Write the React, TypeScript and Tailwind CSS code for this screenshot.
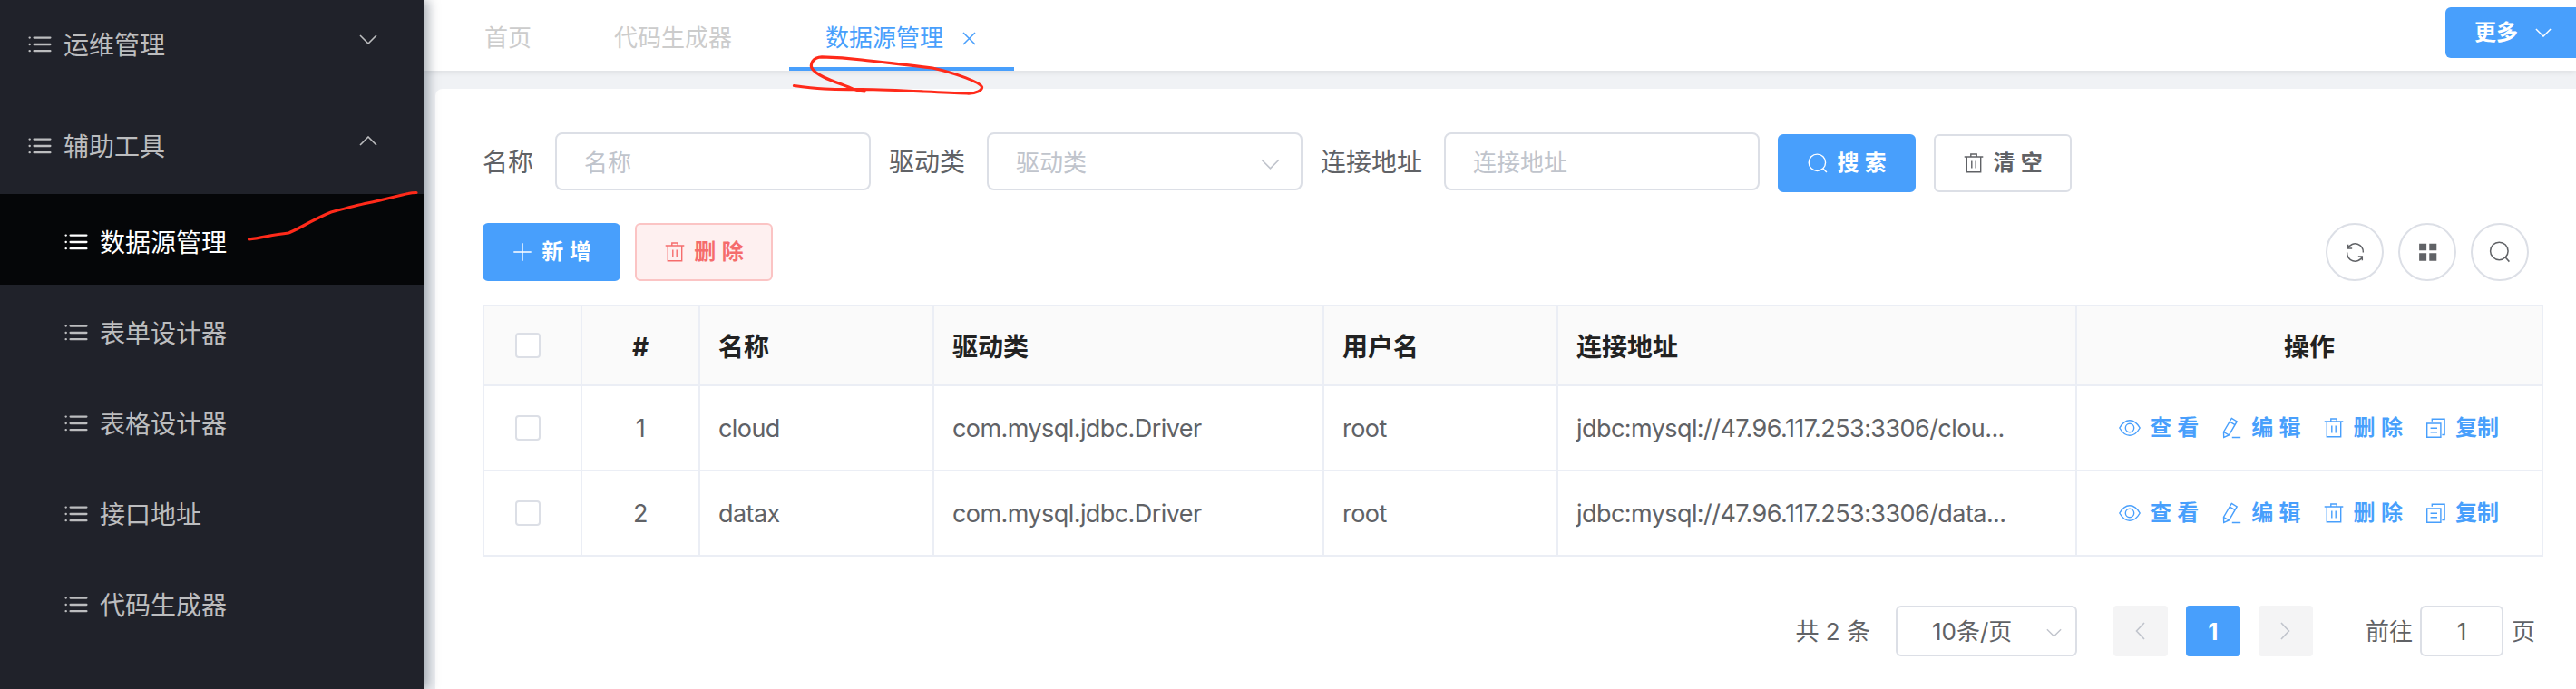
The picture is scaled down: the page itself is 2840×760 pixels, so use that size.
import React from "react";

type IconProps = { className?: string; children: React.ReactNode; size?: number };

function Icon({ className = "", children, size = 24 }: IconProps) {
  return (
    <svg
      width={size}
      height={size}
      viewBox="0 0 24 24"
      fill="none"
      stroke="currentColor"
      strokeWidth="1.4"
      className={"block shrink-0 " + className}
    >
      {children}
    </svg>
  );
}

const ListIcon = () => (
  <svg width="28" height="20" viewBox="0 0 28 20" className="block shrink-0" stroke="currentColor" strokeWidth="2.3" strokeLinecap="round">
    <path d="M7.6 2.6h17.8M7.6 10h17.8M7.6 17.2h17.8M2.6 2.6h.2M2.6 10h.2M2.6 17.2h.2" />
  </svg>
);

const Trash = () => (
  <Icon>
    <path d="M1.7 5h20.6M4.3 5v16.8h15.4V5M8.8 5V2h6.4v3M9.8 9.5v8M14.2 9.5v8" />
  </Icon>
);
const Search = () => (
  <Icon>
    <circle cx="11.4" cy="11.3" r="9.2" />
    <path d="M17.9 17.9l4 4.2" />
  </Icon>
);
const Plus = () => (
  <Icon>
    <path d="M12 2.3v19.4M2.3 12h19.4" />
  </Icon>
);
const Eye = () => (
  <Icon>
    <path d="M.8 12C4.200 6 8 3.700 12 3.700S19.800 6 23.200 12C19.800 18 16 20.300 12 20.300S4.200 18 .8 12z" />
    <circle cx="12" cy="12" r="4.700" />
  </Icon>
);
const Pencil = () => (
  <Icon>
    <path d="M12.300 1.400l5.900 3.500L9.400 19.900l-5.700 2.600-.2-6.100zM10.200 5.200l5.900 3.500M3.600 16.500l5.700 3.400M12.800 22.500h9.400" />
  </Icon>
);
const Copy = () => (
  <Icon>
    <path d="M2.700 7h15.200v15.300H2.700zM8.300 4.800V2.300h13.800v17.200h-2.700M6.600 12.300h7.400M6.600 16.700h7.400" />
  </Icon>
);
const Refresh = () => (
  <Icon size={25}>
    <path d="M4.600 7.100A8.500 8.500 0 0 1 20.500 12M3.500 12A8.500 8.500 0 0 0 19.400 16.900M4.500 3.600v4h4.300M19.500 20.400v-4h-4.300" />
  </Icon>
);
const Grid = () => (
  <Icon size={25}>
    <path stroke="none" fill="currentColor" d="M3 2.600h7.700v7.200H3zM13.700 2.600h7.700v7.200h-7.700zM3 12.800h7.700v8H3zM13.700 12.800h7.700v8h-7.700z" />
  </Icon>
);

function Chevron({ dir, w = 20, h = 12, className = "" }: { dir: "up" | "down" | "left" | "right"; w?: number; h?: number; className?: string }) {
  const d = {
    down: "M1 1L10 10L19 1",
    up: "M1 10L10 1L19 10",
    left: "M10 1L1.500 10L10 19",
    right: "M1 1L9.500 10L1 19",
  }[dir];
  const vertical = dir === "left" || dir === "right";
  return (
    <svg width={w} height={h} viewBox={vertical ? "0 0 11 20" : "0 0 20 11"} fill="none" stroke="currentColor" strokeWidth="1.6" className={"block shrink-0 " + className}>
      <path d={d} />
    </svg>
  );
}

function MenuGroup({ label, open }: { label: string; open?: boolean }) {
  return (
    <div className="flex h-[112px] shrink-0 items-center pl-[30px] pr-[52px] pt-[5px] text-[#bcbdbf]">
      <ListIcon />
      <span className="ml-[12px] flex-1 pt-[2px] text-[28px] leading-10">{label}</span>
      <Chevron dir={open ? "up" : "down"} w={20} h={11} className="-mt-[11px]" />
    </div>
  );
}

function MenuItem({ label, active }: { label: string; active?: boolean }) {
  return (
    <div className={"flex h-[100px] shrink-0 items-center pl-[70px] pt-[5px] " + (active ? "bg-[#050608] text-white" : "text-[#bcbdbf]")}>
      <ListIcon />
      <span className="ml-[12px] pt-[2px] text-[28px] leading-10">{label}</span>
    </div>
  );
}

function Field({ label, gap, select }: { label: string; gap: string; select?: boolean }) {
  return (
    <>
      <span className={"whitespace-nowrap pt-[2px] text-[28px] leading-10 text-[#606266] " + gap}>{label}</span>
      <div className="ml-[24px] flex h-[64px] w-[348px] shrink-0 items-center justify-between rounded-[8px] border-2 border-[#dcdfe6] pl-[30px] pr-[23px] text-[26px] text-[#c0c4cc]">
        <span className="pt-[3px]">{label}</span>
        {select && <Chevron dir="down" w={21} h={12} className="mt-[5px]" />}
      </div>
    </>
  );
}

function Button({ icon, label, tone }: { icon: React.ReactNode; label: string; tone: string }) {
  return (
    <div className={"flex h-[64px] w-[152px] shrink-0 items-center justify-center gap-[9px] rounded-[6px] border-2 text-[24px] font-bold " + tone}>
      {icon}
      <span className="whitespace-nowrap [word-spacing:0.6px]">{label}</span>
    </div>
  );
}

const cell = "flex items-center border-r-2 border-b-2 border-[#ebeef5]";
const columns = "grid grid-cols-[108px_130px_258px_430px_258px_572px_514px]";

const Box = () => <span className="mr-[10px] block size-[28px] rounded-[4px] border-2 border-[#dcdfe6] bg-white" />;

const actions = [
  { icon: <Eye />, label: "查 看" },
  { icon: <Pencil />, label: "编 辑" },
  { icon: <Trash />, label: "删 除" },
  { icon: <Copy />, label: "复制" },
];

const rows = [
  { id: 1, name: "cloud", driver: "com.mysql.jdbc.Driver", user: "root", url: "jdbc:mysql://47.96.117.253:3306/clou..." },
  { id: 2, name: "datax", driver: "com.mysql.jdbc.Driver", user: "root", url: "jdbc:mysql://47.96.117.253:3306/data..." },
];

const headers = ["名称", "驱动类", "用户名", "连接地址"];

export default function App() {
  return (
    <div className="relative flex h-[760px] w-[2840px] overflow-hidden bg-[#f0f2f5] font-['Inter','Noto_Sans_CJK_SC',sans-serif]">
      <aside className="relative z-10 flex w-[468px] shrink-0 flex-col bg-[#20222a] shadow-[4px_0_12px_rgba(0,21,41,0.35)]">
        <div className="-mt-[10px] flex flex-col">
          <MenuGroup label="运维管理" />
          <MenuGroup label="辅助工具" open />
          <MenuItem label="数据源管理" active />
          <MenuItem label="表单设计器" />
          <MenuItem label="表格设计器" />
          <MenuItem label="接口地址" />
          <MenuItem label="代码生成器" />
        </div>
      </aside>

      <main className="flex min-w-0 flex-1 flex-col">
        <div className="flex h-[78px] shrink-0 justify-between bg-white text-[26px] text-[#cccccc] shadow-[0_2px_6px_rgba(0,0,0,0.08)]">
          <div className="flex">
            <span className="ml-[66px] pt-[22px] leading-10">首页</span>
            <span className="ml-[91px] pt-[22px] leading-10">代码生成器</span>
            <div className="ml-[63px] flex w-[248px] border-b-4 border-[#489ffc] pl-[40px] text-[#489ffc]">
              <span className="pt-[22px] leading-10">数据源管理</span>
              <svg width="15" height="15" viewBox="0 0 15 15" className="ml-[21px] mt-[35px]" stroke="currentColor" strokeWidth="1.5">
                <path d="M1 1l13 13M14 1L1 14" />
              </svg>
            </div>
          </div>
          <div className="mt-2 flex h-[56px] w-[144px] items-center rounded-l-[6px] bg-[#489ffc] pl-[32px] text-[24px] font-bold text-white">
            更多
            <Chevron dir="down" w={18} h={10} className="ml-[19px]" />
          </div>
        </div>

        <section className="ml-[12px] mt-[20px] flex flex-1 flex-col rounded-tl-[8px] bg-white pl-[52px]">
          <div className="mt-[48px] flex h-[64px] items-center">
            <Field label="名称" gap="" />
            <Field label="驱动类" gap="ml-[20px]" select />
            <Field label="连接地址" gap="ml-[20px]" />
            <div className="ml-[20px] flex gap-[20px] pt-[4px]">
              <Button icon={<Search />} label="搜 索" tone="border-[#489ffc] bg-[#489ffc] text-white" />
              <Button icon={<Trash />} label="清 空" tone="border-[#dcdfe6] bg-white text-[#606266]" />
            </div>
          </div>

          <div className="mt-[36px] flex h-[64px] items-center pr-[52px]">
            <Button icon={<Plus />} label="新 增" tone="border-[#489ffc] bg-[#489ffc] text-white" />
            <div className="ml-[16px]">
              <Button icon={<Trash />} label="删 除" tone="border-[#fbc4c4] bg-[#fef0f0] text-[#f56c6c]" />
            </div>
            <div className="ml-auto flex gap-[16px] text-[#606266]">
              {[<Refresh key="r" />, <Grid key="g" />, <Icon key="s" size={26}><circle cx="11.400" cy="11" r="9" /><path d="M17.600 17.400l4 4.400" /></Icon>].map((icon, i) => (
                <span key={i} className="flex size-[64px] items-center justify-center rounded-full border-2 border-[#dcdfe6]">
                  {icon}
                </span>
              ))}
            </div>
          </div>

          <div className="mt-[26px] w-[2272px] border-l-2 border-t-2 border-[#ebeef5] text-[27px] tracking-[-0.57px] text-[#606266]">
            <div className={columns + " h-[88px] bg-[#fafafa] text-[28px] font-bold tracking-normal text-[#222222]"}>
              <div className={cell + " justify-center"}><Box /></div>
              <div className={cell + " justify-center pt-[3px]"}>#</div>
              {headers.map((h) => (
                <div key={h} className={cell + " pl-[20px] pt-[3px]"}>{h}</div>
              ))}
              <div className={cell + " justify-center pt-[3px]"}>操作</div>
            </div>
            {rows.map((r) => (
              <div key={r.id} className={columns + " h-[94px]"}>
                <div className={cell + " justify-center"}><Box /></div>
                <div className={cell + " justify-center pt-[2px]"}>{r.id}</div>
                <div className={cell + " pl-[20px] pt-[2px]"}>{r.name}</div>
                <div className={cell + " pl-[20px] pt-[2px]"}>{r.driver}</div>
                <div className={cell + " pl-[20px] pt-[2px]"}>{r.user}</div>
                <div className={cell + " whitespace-nowrap pl-[20px] pt-[2px]"}>{r.url}</div>
                <div className={cell + " gap-[24px] pl-[46px] text-[24px] font-bold tracking-normal text-[#489ffc]"}>
                  {actions.map((a) => (
                    <span key={a.label} className="flex items-center gap-[10px]">
                      {a.icon}
                      <span className="whitespace-nowrap [word-spacing:0.6px]">{a.label}</span>
                    </span>
                  ))}
                </div>
              </div>
            ))}
          </div>

          <div className="mt-[54px] flex h-[56px] items-center justify-end pr-[45px] text-[26px] text-[#606266]">
            <span>共 2 条</span>
            <div className="ml-[28px] flex h-[56px] w-[200px] items-center justify-between rounded-[6px] border-2 border-[#dcdfe6] pl-[38px] pr-[15px]">
              <span>10条/页</span>
              <Chevron dir="down" w={17} h={10} className="mt-[4px] text-[#c0c4cc]" />
            </div>
            <div className="ml-[40px] flex gap-[20px]">
              <span className="flex h-[56px] w-[60px] items-center justify-center rounded-[4px] bg-[#f4f4f5] text-[#c0c4cc]">
                <Chevron dir="left" w={11} h={20} />
              </span>
              <span className="flex h-[56px] w-[60px] items-center justify-center rounded-[4px] bg-[#489ffc] font-bold text-white">1</span>
              <span className="flex h-[56px] w-[60px] items-center justify-center rounded-[4px] bg-[#f4f4f5] text-[#c0c4cc]">
                <Chevron dir="right" w={11} h={20} />
              </span>
            </div>
            <span className="ml-[58px]">前往</span>
            <span className="ml-[8px] flex h-[56px] w-[92px] items-center justify-center rounded-[6px] border-2 border-[#dcdfe6]">1</span>
            <span className="ml-[9px]">页</span>
          </div>
        </section>
      </main>

      <svg className="pointer-events-none absolute left-0 top-0 z-20" width="1120" height="280" viewBox="0 0 1120 280" fill="none" stroke="#ff2a1a" strokeWidth="3.200" strokeLinecap="round" strokeLinejoin="round">
        <path d="M274.500 264C290 262 300 259 318 257C325 255 345 242 365 234C380 230 395 226 405 224C425 220 438 216 450 213.500C454 212.500 456 212.500 459 212.500" />
        <path d="M875.500 94.500C900 98 915 99 950 98.500C990 99 1030 102 1066 103C1077 103.500 1083 99 1082.500 96C1081 91 1055 81 1028 75C1000 71.500 975 69 950 66C935 64 920 63 906 62.800C896 63 893 71 895 75C900 85 930 93 940 98C945 100 948 100 953 101" />
      </svg>
    </div>
  );
}
